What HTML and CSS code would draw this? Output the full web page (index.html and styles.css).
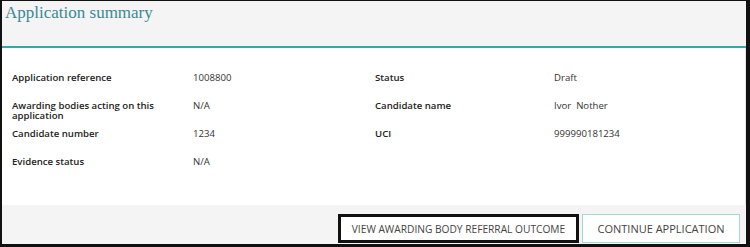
FILE: index.html
```html
<!DOCTYPE html>
<html lang="en">
  <head>
    <meta charset="UTF-8" />
    <meta name="viewport" content="width=device-width, initial-scale=1.0" />
    <title>Application summary</title>
    <link rel="stylesheet" href="styles.css">
  </head>
  <body>
    <div class="frame">
      <div class="header">
        <h1>Application summary</h1>
      </div>

      <div class="summary">
        <div class="row">
          <span class="label">Application reference</span>
          <span class="value">1008800</span>
          <span class="label">Status</span>
          <span class="value">Draft</span>
        </div>
        <div class="row">
          <span class="label">Awarding bodies acting on this application</span>
          <span class="value">N/A</span>
          <span class="label">Candidate name</span>
          <span class="value">Ivor&nbsp; Nother</span>
        </div>
        <div class="row">
          <span class="label">Candidate number</span>
          <span class="value">1234</span>
          <span class="label">UCI</span>
          <span class="value">999990181234</span>
        </div>
        <div class="row">
          <span class="label">Evidence status</span>
          <span class="value">N/A</span>
          <span class="label"></span>
          <span class="value"></span>
        </div>
      </div>

      <div class="actions">
        <button class="btn btn-outline">View awarding body referral outcome</button>
        <button class="btn btn-primary">Continue application</button>
      </div>
    </div>
  </body>
</html>
```

FILE: styles.css
```css
* {
  margin: 0;
  padding: 0;
  box-sizing: border-box;
}

body {
  font-family: "Open Sans", Arial, sans-serif;
  background: #ffffff;
}

.frame {
  width: 750px;
  height: 247px;
  border-style: solid;
  border-color: #111111;
  border-width: 1px 4px 3px 2px;
  background: #f4f4f4;
  display: flex;
  flex-direction: column;
}

.header {
  height: 47px;
  padding: 2px 0 0 3px;
  border-bottom: 2px solid #35a89f;
}

h1 {
  font-family: "Liberation Serif", "DejaVu Serif", serif;
  font-weight: normal;
  font-size: 17px;
  line-height: 20px;
  color: #3b8896;
}

.summary {
  background: #ffffff;
  height: 157px;
  padding: 25px 0 0 10px;
  border-right: 1px solid #e4e4e4;
}

.row {
  display: grid;
  grid-template-columns: 181px 182px 179px 1fr;
  height: 28px;
  align-items: start;
  font-size: 9.6px;
  line-height: 10px;
  color: #222222;
}

.label {
  font-weight: 600;
  padding-right: 20px;
}

.value {
  color: #333333;
}

.actions {
  flex: 1;
  display: flex;
  justify-content: flex-end;
  align-items: flex-end;
  gap: 3px;
  padding: 0 6px 1px 0;
}

.btn {
  font-family: "Open Sans", Arial, sans-serif;
  font-size: 10.2px;
  text-transform: uppercase;
  color: #444444;
  background: #ffffff;
  height: 29px;
  cursor: pointer;
}

.btn-outline {
  width: 241px;
  border: 3px solid #111111;
}

.btn-primary {
  width: 158px;
  border: 1px solid #9fd9cf;
  font-size: 11px;
}
```
